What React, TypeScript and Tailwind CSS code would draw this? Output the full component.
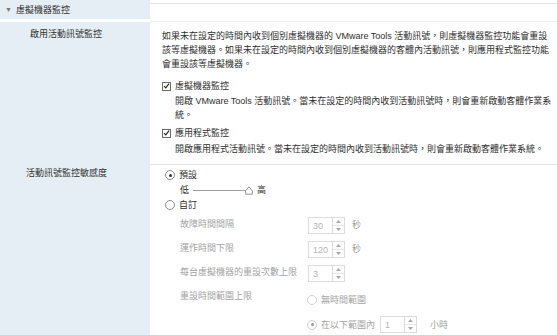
import React from "react";

const Check = () => (
  <span className="inline-flex items-center justify-center w-[9px] h-[9px] border border-[#6b6b6b] bg-white mr-[4px] shrink-0">
    <svg width="8" height="8" viewBox="0 0 8 8">
      <path d="M1.2 4.2 L3.2 6.2 L6.9 1.3" stroke="#222" strokeWidth="1.3" fill="none" />
    </svg>
  </span>
);

const Radio = ({ on, disabled }: { on?: boolean; disabled?: boolean }) => (
  <span
    className={
      "inline-flex items-center justify-center w-[10px] h-[10px] rounded-full border bg-white mr-[4px] shrink-0 " +
      (disabled ? "border-[#cfcfcf]" : "border-[#8a8a8a]")
    }
  >
    {on ? (
      <span className={"w-[3px] h-[3px] rounded-full " + (disabled ? "bg-[#9a9a9a]" : "bg-[#333]")} />
    ) : null}
  </span>
);

const Spinner = ({ value, w = "w-[37px]" }: { value: string; w?: string }) => (
  <div className={"flex h-[17px] border border-[#dcdcdc] bg-white " + w}>
    <div className="flex-1 flex items-center pl-[4px] text-[9px] text-[#b5b5b5] font-['Liberation_Sans',sans-serif]">
      {value}
    </div>
    <div className="w-[12px] flex flex-col border-l border-[#dcdcdc]">
      <div className="flex-1 flex items-center justify-center border-b border-[#e6e6e6]">
        <svg width="5" height="3" viewBox="0 0 5 3"><path d="M0 3 L2.5 0 L5 3Z" fill="#a8a8a8" /></svg>
      </div>
      <div className="flex-1 flex items-center justify-center">
        <svg width="5" height="3" viewBox="0 0 5 3"><path d="M0 0 L2.5 3 L5 0Z" fill="#a8a8a8" /></svg>
      </div>
    </div>
  </div>
);

export default function App() {
  return (
    <div className="w-[557px] h-[335px] bg-white overflow-hidden text-[9px] leading-[14px] text-[#2e2e2e] font-['Liberation_Sans','Noto_Sans_CJK_TC',sans-serif]">
      <div className="grid grid-cols-[150px_1fr] h-full">
        {/* header */}
        <div className="bg-[#e6eef5] h-[19px] flex items-center pl-[5px] pt-[1px]">
          <span className="text-[7px] text-[#777] mr-[4px]">▼</span>
          <span>虛擬機器監控</span>
        </div>
        <div className="h-[19px] border-t border-[#e4e4e4] mt-[3px] border-b border-b-[#f0f0f0]" />

        {/* row 1 */}
        <div className="bg-[#e6eef5] pl-[30px] pt-[5px]">啟用活動訊號監控</div>
        <div className="pl-[12px] pt-[7px] border-b border-[#e4e4e4] h-[143px] whitespace-nowrap">
          <div>如果未在設定的時間內收到個別虛擬機器的 VMware Tools 活動訊號，則虛擬機器監控功能會重設</div>
          <div>該等虛擬機器。如果未在設定的時間內收到個別虛擬機器的客體內活動訊號，則應用程式監控功能</div>
          <div>會重設該等虛擬機器。</div>
          <div className="flex items-center mt-[8px]">
            <Check />
            <span>虛擬機器監控</span>
          </div>
          <div className="pl-[13px] mt-[1px]">
            <div>開啟 VMware Tools 活動訊號。當未在設定的時間內收到活動訊號時，則會重新啟動客體作業系</div>
            <div>統。</div>
          </div>
          <div className="flex items-center mt-[4px]">
            <Check />
            <span>應用程式監控</span>
          </div>
          <div className="pl-[13px] mt-[2px]">
            開啟應用程式活動訊號。當未在設定的時間內收到活動訊號時，則會重新啟動客體作業系統。
          </div>
        </div>

        {/* row 2 */}
        <div className="bg-[#e6eef5] pl-[26px] pt-[1px]">活動訊號監控敏感度</div>
        <div className="pl-[15px] pt-[3px] whitespace-nowrap">
          <div className="flex items-center">
            <Radio on />
            <span>預設</span>
          </div>
          <div className="flex items-center pl-[15px] mt-[1px]">
            <span>低</span>
            <div className="w-[53px] h-[1px] bg-[#9d9d9d] ml-[4px]" />
            <svg width="8" height="9" viewBox="0 0 8 9" className="-ml-[1px]">
              <path d="M4 0.8 L7.3 4.8 L7.3 8.2 L0.7 8.2 L0.7 4.8 Z" fill="#fff" stroke="#8a8a8a" strokeWidth="0.9" strokeLinejoin="round" />
            </svg>
            <span className="ml-[4px]">高</span>
          </div>
          <div className="flex items-center mt-[1px]">
            <Radio />
            <span>自訂</span>
          </div>
          <div className="grid grid-cols-[128px_auto] auto-rows-[24px] mt-[5px] pl-[15px] text-[#a3a3a3]">
            <div>故障時間間隔</div>
            <div className="flex items-start gap-[7px]">
              <Spinner value="30" />
              <span className="leading-[17px]">秒</span>
            </div>
            <div>運作時間下限</div>
            <div className="flex items-start gap-[7px]">
              <Spinner value="120" />
              <span className="leading-[17px]">秒</span>
            </div>
            <div>每台虛擬機器的重設次數上限</div>
            <div className="flex items-start">
              <Spinner value="3" />
            </div>
            <div>重設時間範圍上限</div>
            <div className="flex items-center h-[17px] pt-[4px] -ml-[1px]">
              <Radio disabled />
              <span>無時間範圍</span>
            </div>
            <div />
            <div className="flex items-center -ml-[1px] -mt-[1px]">
              <Radio on disabled />
              <span>在以下範圍內</span>
              <div className="ml-[5px]">
                <Spinner value="1" />
              </div>
              <span className="ml-[13px]">小時</span>
            </div>
          </div>
        </div>
      </div>
    </div>
  );
}
